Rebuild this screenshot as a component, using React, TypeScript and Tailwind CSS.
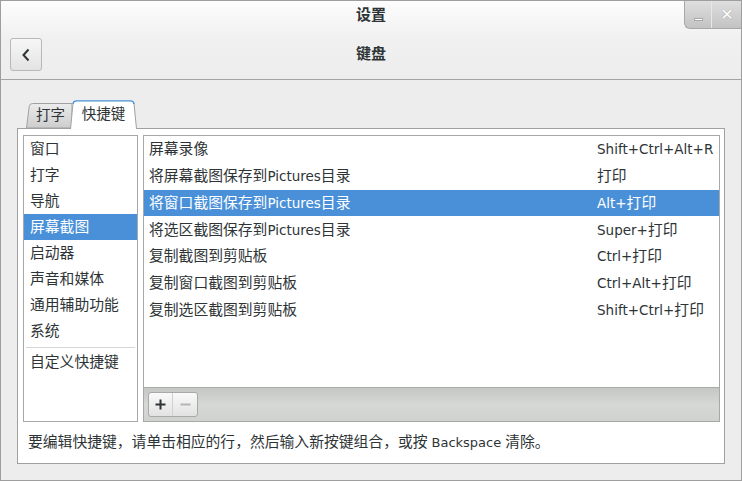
import React from 'react';

const FONT = { fontFamily: '"DejaVu Sans", "Noto Sans CJK SC", sans-serif' };

const CATEGORIES = ['窗口', '打字', '导航', '屏幕截图', '启动器', '声音和媒体', '通用辅助功能', '系统'];

const SHORTCUTS: [string, string][] = [
  ['屏幕录像', 'Shift+Ctrl+Alt+R'],
  ['将屏幕截图保存到Pictures目录', '打印'],
  ['将窗口截图保存到Pictures目录', 'Alt+打印'],
  ['将选区截图保存到Pictures目录', 'Super+打印'],
  ['复制截图到剪贴板', 'Ctrl+打印'],
  ['复制窗口截图到剪贴板', 'Ctrl+Alt+打印'],
  ['复制选区截图到剪贴板', 'Shift+Ctrl+打印'],
];

// latin runs are set a bit smaller than the CJK glyphs, like the original GTK rendering
const Mixed = ({ text }: { text: string }) => (
  <>
    {text.split(/([A-Za-z+ ]+)/).filter(Boolean).map((part, i) =>
      /[A-Za-z]/.test(part) ? <span key={i} className="text-[13.5px]">{part}</span> : <span key={i}>{part}</span>
    )}
  </>
);

const TabShape = ({ active }: { active?: boolean }) =>
  active ? (
    <svg className="absolute inset-0" width="67" height="29" viewBox="0 0 67 29">
      <path d="M0.5,29 L3,3.5 Q3.4,0.7 6.5,0.7 L60.5,0.7 Q63.6,0.7 64,3.5 L66.5,29 Z" fill="#ffffff" />
      <path d="M0.5,29 L3,3.5 M64,3.5 L66.5,29" stroke="#a0a0a0" fill="none" />
      <path d="M3,4 Q3.4,0.9 6.5,0.9 L60.5,0.9 Q63.6,0.9 64,4" stroke="#4a90d9" strokeWidth="1.4" fill="none" />
    </svg>
  ) : (
    <svg className="absolute inset-0" width="46" height="25" viewBox="0 0 46 25">
      <defs>
        <linearGradient id="ti" x1="0" y1="0" x2="0" y2="1">
          <stop offset="0" stopColor="#ececec" />
          <stop offset="1" stopColor="#cdcdcd" />
        </linearGradient>
      </defs>
      <path d="M0.5,25 L3.2,3.5 Q3.6,0.5 6.5,0.5 L46,0.5 L46,25 Z" fill="url(#ti)" stroke="#a0a0a0" />
    </svg>
  );

export default function App() {
  return (
    <div style={FONT} className="w-[742px] h-[481px] border border-[#9e9e9e] bg-[#ededed] text-[#2e3436] flex flex-col overflow-hidden">
      {/* header bar */}
      <div className="relative h-[79px] shrink-0 border-b border-[#a3a3a3] bg-gradient-to-b from-[#fdfdfd] via-[#f0f0f0] to-[#ededed]">
        <div className="h-[28px] flex items-center justify-center text-[15px] font-bold">设置</div>
        <div className="grid grid-cols-[32px_1fr_32px] items-center px-[9px] pt-[9px]">
          <button className="w-[32px] h-[33px] rounded-[3px] border border-[#b8b8b8] bg-gradient-to-b from-[#f7f7f7] to-[#e3e3e3] flex items-center justify-center">
            <svg width="10" height="14" viewBox="0 0 10 14">
              <polyline points="7.5,1.5 2.5,7 7.5,12.5" fill="none" stroke="#2e3436" strokeWidth="2" />
            </svg>
          </button>
          <div className="text-center text-[15px] font-bold">键盘</div>
          <div />
        </div>
        <div className="absolute top-0 right-[-1px] w-[58px] h-[28px] flex rounded-bl-[6px] border-l border-b border-[#a8a8a8] bg-gradient-to-b from-[#dedede] to-[#c3c3c3] overflow-hidden">
          <div className="w-[27px] flex items-center justify-center border-r border-[#e8e8e8]">
            <div className="w-[9px] h-[3px] mt-[10px] bg-white border border-[#a8a8a8]" />
          </div>
          <div className="flex-1 flex items-center justify-center text-white text-[16px] font-bold [text-shadow:0_0_1px_#8a8a8a]">✕</div>
        </div>
      </div>

      {/* notebook */}
      <div className="flex-1 flex flex-col pt-[20px] pl-[16px] pr-[16px] pb-[16px]">
        <div className="flex items-end h-[28px] pl-[9px]">
          <div className="relative w-[46px] h-[25px] flex items-center justify-center pl-[3px] text-[14.5px]">
            <TabShape />
            <span className="relative">打字</span>
          </div>
          <div className="relative z-10 w-[67px] h-[29px] ml-[-2px] mb-[-1px] flex items-center justify-center text-[14.5px]">
            <TabShape active />
            <span className="relative">快捷键</span>
          </div>
        </div>

        <div className="flex-1 flex flex-col bg-white border border-[#a0a0a0]">
          <div className="flex gap-[5px] pt-[6px] pl-[5px] pr-[4px] h-[293px]">
            {/* category list */}
            <div className="w-[115px] border border-[#a8a8a8] bg-white text-[14.8px]">
              {CATEGORIES.map(c => (
                <div key={c} className={`h-[26px] flex items-center pl-[6px] ${c === '屏幕截图' ? 'bg-[#4a90d9] text-white' : ''}`}>{c}</div>
              ))}
              <div className="mx-[2px] mt-[3px] mb-[1px] h-px bg-[#d6d6d6]" />
              <div className="h-[26px] flex items-center pl-[6px]">自定义快捷键</div>
            </div>

            {/* shortcut list */}
            <div className="flex-1 flex flex-col border border-[#a8a8a8]">
              <div className="flex-1 bg-white text-[14.8px]">
                {SHORTCUTS.map(([name, accel], i) => (
                  <div key={name} className={`h-[26.8px] flex items-center pl-[5px] ${i === 2 ? 'bg-[#4a90d9] text-white' : ''}`}>
                    <span className="w-[448px] shrink-0"><Mixed text={name} /></span>
                    <span><Mixed text={accel} /></span>
                  </div>
                ))}
              </div>
              <div className="h-[34px] shrink-0 border-t border-[#a9aba8] bg-gradient-to-b from-[#c4c7c3] via-[#d6d8d5] to-[#cfd2ce] flex items-center pl-[4px]">
                <div className="flex h-[25px] rounded-[3px] border border-[#a9a9a9] bg-gradient-to-b from-[#fafafa] to-[#e2e2e2] overflow-hidden">
                  <div className="w-[24px] flex items-center justify-center border-r border-[#d0d0d0]">
                    <svg width="11" height="11" viewBox="0 0 11 11"><path d="M5.5,0.5 V10.5 M0.5,5.5 H10.5" stroke="#2e3436" strokeWidth="2" /></svg>
                  </div>
                  <div className="w-[24px] flex items-center justify-center">
                    <svg width="11" height="11" viewBox="0 0 11 11"><path d="M0.5,5.5 H10.5" stroke="#b4b6b3" strokeWidth="2" /></svg>
                  </div>
                </div>
              </div>
            </div>
          </div>
          <div className="flex-1 flex items-center pl-[10px] text-[14.8px]">
            要编辑快捷键，请单击相应的行，然后输入新按键组合，或按 <span className="text-[13px] mx-[4px]">Backspace</span> 清除。
          </div>
        </div>
      </div>
    </div>
  );
}
